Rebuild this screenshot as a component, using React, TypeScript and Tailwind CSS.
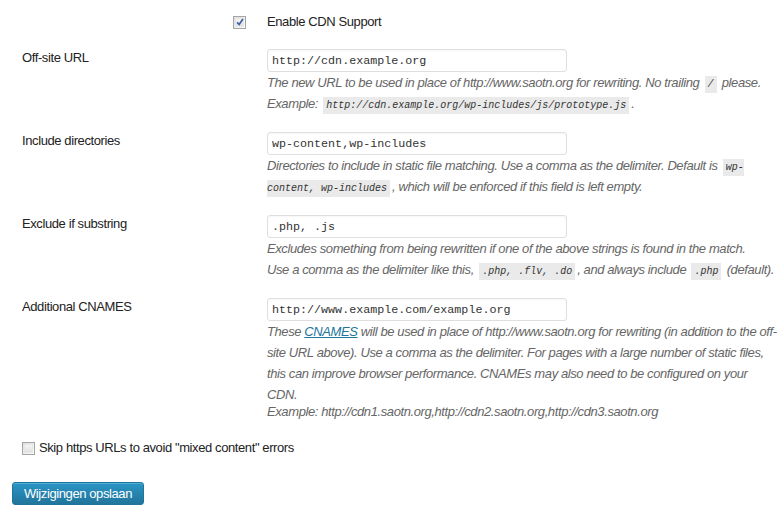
import React from "react";

const sans = "font-['Liberation_Sans',Arial,sans-serif]";
const mono = "font-['Liberation_Mono','DejaVu_Sans_Mono',monospace]";

function Code({ children }: { children: React.ReactNode }) {
  return (
    <code
      className={`${mono} text-[10px] leading-none tracking-normal bg-[#eaeaea] px-[3px] py-[3px] mx-[2px] text-[#333]`}
    >
      {children}
    </code>
  );
}

function TextField({ value }: { value: string }) {
  return (
    <input
      type="text"
      defaultValue={value}
      className={`${mono} block w-[300px] h-[23px] px-[4px] text-[11.7px] tracking-normal text-[#333] bg-white border border-[#dfdfdf] rounded-[3px] shadow-[inset_0_1px_2px_rgba(0,0,0,0.04)] outline-none`}
    />
  );
}

function Checkbox({ checked }: { checked?: boolean }) {
  return (
    <span className="relative inline-flex items-center justify-center w-[13px] h-[13px] border border-[#a5a5a5] bg-gradient-to-br from-[#dcdcdc] to-white shrink-0">
      <span className="absolute inset-[1px] border border-[#e6e6e6] bg-gradient-to-b from-[#f4f4f4] to-[#e2e2e2]" />
      {checked && (
        <svg
          viewBox="0 0 12 12"
          className="relative w-[10px] h-[10px]"
          fill="none"
          stroke="#3a5ea8"
          strokeWidth="2"
        >
          <path d="M2.5 6.5 L5 9 L9.5 2.5" />
        </svg>
      )}
    </span>
  );
}

function Row({
  label,
  value,
  children,
}: {
  label: string;
  value: string;
  children: React.ReactNode;
}) {
  return (
    <div className="grid grid-cols-[245px_510px]">
      <div className="pt-[1px] leading-[16px] text-[#222]">{label}</div>
      <div>
        <TextField value={value} />
        <div className="italic text-[#666] leading-[21px]">{children}</div>
      </div>
    </div>
  );
}

export default function App() {
  return (
    <div
      className={`${sans} text-[13px] tracking-[-0.4px] bg-white w-[784px] h-[519px] pl-[22px] pt-[14px]`}
    >
      {/* CDN aan/uit */}
      <div className="grid grid-cols-[245px_510px] items-center h-[13px]">
        <div className="pl-[211px] flex">
          <Checkbox checked />
        </div>
        <div className="text-[#222] leading-[16px]">Enable CDN Support</div>
      </div>

      <div className="flex flex-col gap-[18px] mt-[22px]">
        <Row label="Off-site URL" value="http://cdn.example.org">
          The new URL to be used in place of http://www.saotn.org for rewriting. No
          trailing <Code>/</Code> please.
          <br />
          Example: <Code>http://cdn.example.org/wp-includes/js/prototype.js</Code>.
        </Row>

        <Row label="Include directories" value="wp-content,wp-includes">
          Directories to include in static file matching. Use a comma as the delimiter.
          Default is <Code>wp-content, wp-includes</Code>, which will be enforced if
          this field is left empty.
        </Row>

        <Row label="Exclude if substring" value=".php, .js">
          Excludes something from being rewritten if one of the above strings is found
          in the match.
          <br />
          Use a comma as the delimiter like this, <Code>.php, .flv, .do</Code>, and
          always include <Code>.php</Code> (default).
        </Row>

        <Row label="Additional CNAMES" value="http://www.example.com/example.org">
          These{" "}
          <a href="#" className="text-[#21759b] underline">
            CNAMES
          </a>{" "}
          will be used in place of http://www.saotn.org for rewriting (in addition to
          the off-site URL above). Use a comma as the delimiter. For pages with a large
          number of static files, this can improve browser performance. CNAMEs may also
          need to be configured on your CDN.
          <span className="block leading-[16px] mt-[-1px]">
            Example: http://cdn1.saotn.org,http://cdn2.saotn.org,http://cdn3.saotn.org
          </span>
        </Row>
      </div>

      <label className="flex items-center gap-[4px] mt-[20px] text-[#222] leading-[16px]">
        <Checkbox />
        Skip https URLs to avoid "mixed content" errors
      </label>

      <button
        type="button"
        className="mt-[26px] ml-[-10px] h-[23px] px-[11px] rounded-[3px] border border-[#21759b] bg-gradient-to-b from-[#2a95c5] to-[#21759b] text-white text-[13px] leading-[20px] shadow-[inset_0_1px_0_rgba(120,200,230,0.5)]"
      >
        Wijzigingen opslaan
      </button>
    </div>
  );
}
